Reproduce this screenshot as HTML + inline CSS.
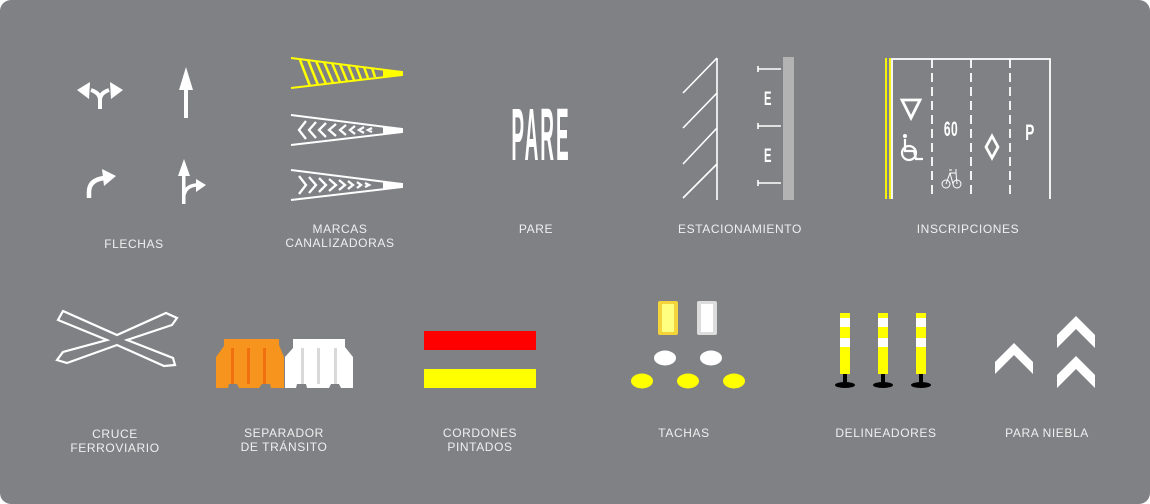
<!DOCTYPE html>
<html><head><meta charset="utf-8"><style>
html,body{margin:0;padding:0;background:#fff;width:1150px;height:504px;overflow:hidden}
svg{display:block}
text{font-family:"Liberation Sans",sans-serif;fill:#eef0f0;font-size:12px;text-anchor:middle;letter-spacing:0.6px}
</style></head><body>
<svg width="1150" height="504" viewBox="0 0 1150 504">
<rect x="0" y="0" width="1150" height="504" rx="11" fill="#808184"/>
<!-- FLECHAS -->
<g fill="#fff" stroke="#fff">
 <path d="M100 109 V100 Q100 93 91 90 M100 100 Q100 93 109 90" fill="none" stroke-width="4"/>
 <path d="M77 90 L90 82 L89 99 Z M123 90 L110 82 L111 99 Z" stroke="none"/>
 <rect x="184" y="88" width="4" height="30" stroke="none"/>
 <path d="M186 67 L193 90 L179 90 Z" stroke="none"/>
 <path d="M89 198 V192 Q89 180 104 178" fill="none" stroke-width="4.5"/>
 <path d="M116 176 L102 169 L104 186 Z" stroke="none"/>
 <rect x="182" y="172" width="3.5" height="32" stroke="none"/>
 <path d="M184 159 L190 176 L178 176 Z" stroke="none"/>
 <path d="M184 195 Q186 185 198 185" fill="none" stroke-width="3.5"/>
 <path d="M206 185 L196 179 L196 192 Z" stroke="none"/>
</g>
<text x="134" y="248">FLECHAS</text>
<!-- MARCAS -->
<g>
 <path d="M291 58 L402 72 L402 75 L291 88" fill="none" stroke="#ffff00" stroke-width="2"/>
 <path d="M383 70 L402 71 L402 76 L383 77Z" fill="#ffff00"/>
 <g stroke="#ffff00" stroke-width="2.5">
  <path d="M300 60 L310 86 M308 60 L318 85 M316 61 L326 84 M324 62 L333 83 M332 63 L340 82 M340 64 L347 81 M348 65 L354 80 M356 66 L361 79 M364 67 L368 78 M372 68 L375 77"/>
 </g>
 <g fill="none" stroke="#fff">
  <path d="M291 115 L402 129 L402 132 L291 145" stroke-width="2"/>
  <path d="M291 170 L402 184 L402 187 L291 200" stroke-width="2"/>
  <g stroke-width="2.3">
   <path d="M306 121 L299 130 L306 139 M316 122 L309 130 L316 138 M326 123 L319 130 L326 137 M336 124 L329 130 L336 136 M346 125 L340 130 L346 135 M355 126 L350 130 L355 134 M364 127 L359 130 L364 133 M372 128 L368 130 L372 132"/>
   <path d="M299 176 L306 185 L299 194 M309 177 L316 185 L309 193 M319 178 L326 185 L319 192 M329 179 L336 185 L329 191 M339 180 L345 185 L339 190 M348 181 L353 185 L348 189 M357 182 L361 185 L357 188 M365 183 L369 185 L365 187"/>
  </g>
  <path d="M383 127 L402 128 L402 133 L383 134Z M383 182 L402 183 L402 188 L383 189Z" fill="#fff" stroke="none"/>
 </g>
</g>
<text x="340" y="233">MARCAS</text>
<text x="340" y="247">CANALIZADORAS</text>
<!-- PARE -->
<text x="0" y="0" transform="translate(541,160) scale(0.5,1.95)" style="font-size:38px;font-weight:bold;fill:#fff;letter-spacing:4px">PARE</text>
<text x="536" y="233">PARE</text>
<!-- ESTACIONAMIENTO -->
<g stroke="#fff" stroke-width="1.6" fill="none">
 <path d="M717 58 V200 M717 58 L683 93 M717 93 L683 128 M717 128 L683 164 M717 164 L683 198"/>
 <path d="M758 69 H781 M758 126 H781 M758 183 H781 M758 66 V72 M758 123 V129 M758 180 V186"/>
</g>
<rect x="783" y="57" width="11" height="143" fill="#b3b3b3"/>
<text x="0" y="0" transform="translate(768,105) scale(0.75,1.3)" style="font-size:15px;font-weight:bold;fill:#fff">E</text>
<text x="0" y="0" transform="translate(768,162) scale(0.75,1.3)" style="font-size:15px;font-weight:bold;fill:#fff">E</text>
<text x="740" y="233">ESTACIONAMIENTO</text>
<!-- INSCRIPCIONES -->
<g stroke-width="1.8" fill="none">
 <path d="M886 58 V199 M890 58 V199" stroke="#ffff00"/>
 <path d="M892 199 V59 H1050 V199" stroke="#fff"/>
 <path d="M932 59 V199 M971 59 V199 M1010 59 V199" stroke="#fff" stroke-dasharray="9,5"/>
 <path d="M902 100 H920 L911 118 Z" stroke="#fff" stroke-width="2.8"/>
 <circle cx="909" cy="153" r="7" stroke="#fff" stroke-width="2.2"/>
 <path d="M905 139 V151 H914 L916 159 H923" stroke="#fff" stroke-width="2.2"/>
 <circle cx="905" cy="136" r="2" fill="#fff" stroke="none"/>
 <circle cx="946" cy="184" r="4" stroke="#fff" stroke-width="1"/>
 <circle cx="957" cy="184" r="4" stroke="#fff" stroke-width="1"/>
 <path d="M946 184 L950 173 H956 L957 184 M950 173 L953 184 M949 170 H952 M956 173 V169" stroke="#fff" stroke-width="1"/>
 <path d="M992 136 L998 147 L992 158 L986 147 Z" stroke="#fff" stroke-width="2.8"/>
</g>
<text x="0" y="0" transform="translate(951,136) scale(0.75,1.3)" style="font-size:16px;font-weight:bold;fill:#fff">60</text>
<text x="0" y="0" transform="translate(1030,140) scale(0.8,1.3)" style="font-size:17px;font-weight:bold;fill:#fff">P</text>
<text x="968" y="233">INSCRIPCIONES</text>
<!-- CRUCE -->
<g fill="none" stroke="#fff" stroke-width="2.2" stroke-linejoin="miter">
 <path d="M63 311 L117 335 L166 313 L177 318 L172 325 L127 340 L173 358 L175 365 L164 366 L117 345 L67 363 L57 360 L63 352 L107 340 L58 320 Z"/>
</g>
<text x="115" y="438">CRUCE</text>
<text x="115" y="452">FERROVIARIO</text>
<!-- SEPARADOR -->
<path d="M224 339 H279 V345 L284 357 V388 H271 L270 384 H262 L259 388 H239 L237 384 H229 L228 388 H216 V357 L224 346 Z" fill="#f7941d"/>
<g fill="#f26f0f"><rect x="231" y="348" width="3" height="36"/><rect x="247" y="348" width="3" height="36"/><rect x="263" y="348" width="3" height="36"/></g>
<path d="M293 339 H345 V347 L353 357 V388 H341 L339 384 H331 L329 388 H307 L306 384 H297 L296 388 H285 V357 L293 348 Z" fill="#fff"/>
<g fill="#d9d9d9"><rect x="301" y="348" width="3" height="36"/><rect x="317" y="348" width="3" height="36"/><rect x="334" y="348" width="3" height="36"/></g>
<text x="284" y="437">SEPARADOR</text>
<text x="284" y="451">DE TRÁNSITO</text>
<!-- CORDONES -->
<rect x="424" y="331" width="112" height="19" fill="#ff0000"/>
<rect x="424" y="369" width="112" height="19" fill="#ffff00"/>
<text x="480" y="437">CORDONES</text>
<text x="480" y="451">PINTADOS</text>
<!-- TACHAS -->
<rect x="658" y="301" width="20" height="34" rx="2" fill="#f5d33a"/>
<rect x="662" y="304" width="12" height="28" fill="#ffff80"/>
<rect x="697" y="301" width="20" height="34" rx="2" fill="#dcdcdc"/>
<rect x="701" y="304" width="12" height="28" fill="#fff"/>
<ellipse cx="665" cy="358" rx="11" ry="7.5" fill="#fff"/>
<ellipse cx="711" cy="358" rx="11" ry="7.5" fill="#fff"/>
<ellipse cx="642" cy="381" rx="11" ry="7.5" fill="#ffff00"/>
<ellipse cx="688" cy="381" rx="11" ry="7.5" fill="#ffff00"/>
<ellipse cx="734" cy="381" rx="11" ry="7.5" fill="#ffff00"/>
<text x="684" y="437">TACHAS</text>
<!-- DELINEADORES -->
<g>
 <g id="d1">
  <rect x="840" y="313" width="10" height="61" fill="#ffff00"/>
  <rect x="840" y="318" width="10" height="9" fill="#fff"/>
  <rect x="840" y="338" width="10" height="9" fill="#fff"/>
  <rect x="843" y="374" width="4" height="10" fill="#000"/>
  <ellipse cx="845" cy="385" rx="10" ry="3" fill="#000"/>
 </g>
 <use href="#d1" x="38"/>
 <use href="#d1" x="76"/>
</g>
<text x="886" y="437">DELINEADORES</text>
<!-- PARA NIEBLA -->
<g fill="#fff">
 <path d="M995 362 L1014 343 L1033 362 V374 L1014 355 L995 374 Z"/>
 <path d="M1057 335 L1076 316 L1095 335 V348 L1076 329 L1057 348 Z"/>
 <path d="M1057 375 L1076 356 L1095 375 V388 L1076 369 L1057 388 Z"/>
</g>
<text x="1047" y="437">PARA NIEBLA</text>
</svg>
</body></html>
